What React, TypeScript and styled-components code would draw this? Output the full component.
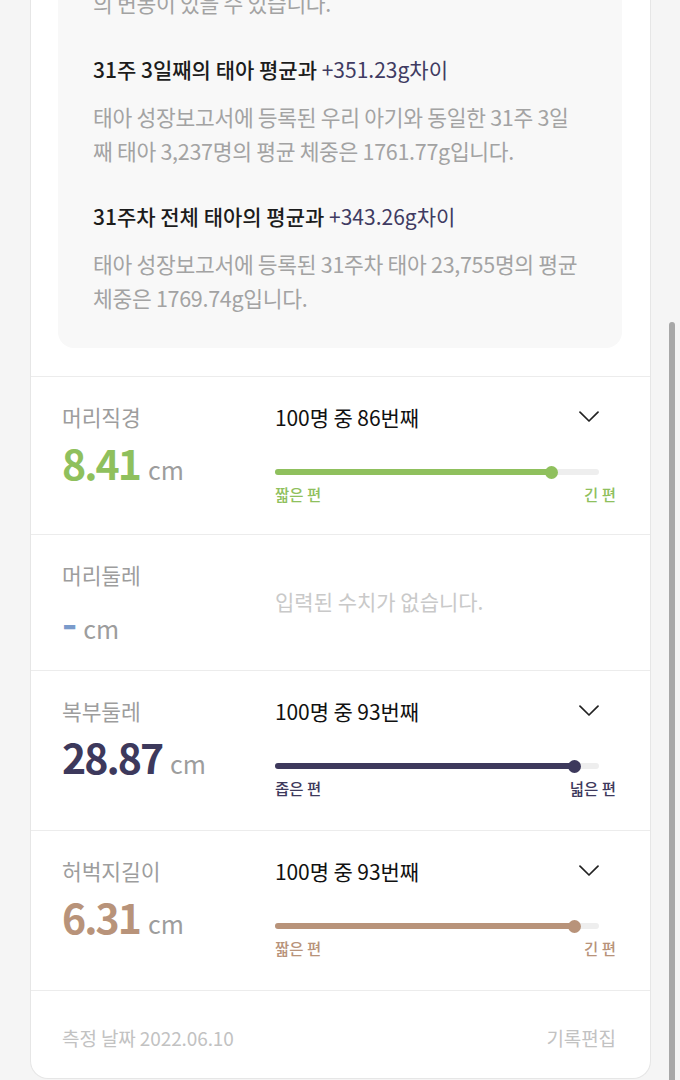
import styled, { createGlobalStyle } from "styled-components";

const GlobalStyle = createGlobalStyle`
  html, body {
    margin: 0;
    padding: 0;
    background: #f5f5f5;
    overflow: hidden;
  }
  body {
    font-family: "Noto Sans CJK KR", "Noto Sans", sans-serif;
    -webkit-font-smoothing: antialiased;
  }
`;

const Card = styled.div`
  margin: -96px 0 0 30px;
  width: 621px;
  box-sizing: border-box;
  background: #fff;
  border: 1px solid #e6e6e6;
  border-top: none;
  border-radius: 0 0 18px 18px;
  padding-top: 28px;
`;

const InfoBox = styled.div`
  margin: 0 28px 28px 27px;
  padding: 20px 35px 33px;
  background: #f8f8f8;
  border-radius: 16px;
`;

const Desc = styled.p`
  margin: 0;
  font-size: 21.5px;
  line-height: 34px;
  color: #a3a3a3;
  letter-spacing: -0.3px;
  white-space: nowrap;
`;

const Heading = styled.h3<{ $first?: boolean }>`
  margin: ${(p) => (p.$first ? "32px" : "31px")} 0 14px;
  font-size: 21px;
  line-height: 34px;
  font-weight: 500;
  color: #1c1c1c;
  span {
    color: #3f3b62;
    font-weight: 400;
  }
`;

const Row = styled.div<{ $pad: number }>`
  display: grid;
  grid-template-columns: 213px 1fr;
  border-top: 1px solid #ececec;
  padding: 26px 34px ${(p) => p.$pad}px 31px;
`;

const Left = styled.div`
  display: flex;
  flex-direction: column;
`;

const Label = styled.div`
  font-size: 21.5px;
  line-height: 28px;
  color: #9d9d9d;
  letter-spacing: -0.1px;
`;

const Value = styled.div<{ $color: string; $gap: number }>`
  margin-top: ${(p) => p.$gap}px;
  display: flex;
  align-items: baseline;
  gap: 8px;
  height: 48px;
  line-height: 48px;
  b {
    font-size: 41px;
    font-weight: 700;
    color: ${(p) => p.$color};
    letter-spacing: -2px;
  }
  small {
    font-size: 25px;
    color: #9d9d9d;
    font-weight: 400;
  }
`;

const Right = styled.div`
  display: flex;
  flex-direction: column;
`;

const RankHead = styled.div`
  display: flex;
  justify-content: space-between;
  align-items: center;
  padding-right: 17px;
  font-size: 21px;
  line-height: 28px;
  color: #111;
  letter-spacing: -0.1px;
`;

const Track = styled.div`
  position: relative;
  margin: 38px 17px 0 0;
  height: 6px;
  border-radius: 3px;
  background: #eeeeee;
`;

const Fill = styled.div<{ $color: string }>`
  height: 100%;
  border-radius: 3px;
  background: ${(p) => p.$color};
  position: relative;
  &::after {
    content: "";
    position: absolute;
    right: -6px;
    top: -3.5px;
    width: 13px;
    height: 13px;
    border-radius: 50%;
    background: ${(p) => p.$color};
  }
`;

const Ends = styled.div<{ $color: string }>`
  margin-top: 8px;
  display: flex;
  justify-content: space-between;
  font-size: 15.5px;
  line-height: 22px;
  font-weight: 500;
  color: ${(p) => p.$color};
`;

const Empty = styled.div`
  align-self: center;
  font-size: 21px;
  color: #c9c9c9;
  margin-top: -4px;
`;

const Footer = styled.div`
  display: flex;
  justify-content: space-between;
  border-top: 1px solid #ececec;
  padding: 33px 34px 26px 31px;
  font-size: 19px;
  line-height: 28px;
  color: #c2c2c2;
  letter-spacing: -0.1px;
`;

const ScrollThumb = styled.div`
  position: fixed;
  right: 5px;
  top: 322px;
  width: 6px;
  height: 780px;
  border-radius: 3px;
  background: #a8a8a8;
`;

const Chevron = () => (
  <svg width="20" height="12" viewBox="0 0 20 12" fill="none">
    <path d="M1 1.2 L10 10 L19 1.2" stroke="#222" strokeWidth="1.7" strokeLinecap="round" strokeLinejoin="round" />
  </svg>
);

type Measure = {
  name: string;
  value: string;
  color: string;
  rank: number;
  low: string;
  high: string;
  pad: number;
};

const measures: Measure[] = [
  { name: "머리직경", value: "8.41", color: "#8fc05d", rank: 86, low: "짧은 편", high: "긴 편", pad: 29 },
  { name: "복부둘레", value: "28.87", color: "#3d395c", rank: 93, low: "좁은 편", high: "넓은 편", pad: 31 },
  { name: "허벅지길이", value: "6.31", color: "#b8937a", rank: 93, low: "짧은 편", high: "긴 편", pad: 31 },
];

const SliderRow = ({ m }: { m: Measure }) => (
  <Row $pad={m.pad}>
    <Left>
      <Label>{m.name}</Label>
      <Value $color={m.color} $gap={7}>
        <b>{m.value}</b>
        <small>cm</small>
      </Value>
    </Left>
    <Right>
      <RankHead>
        <span>100명 중 {m.rank}번째</span>
        <Chevron />
      </RankHead>
      <Track>
        <Fill $color={m.color} style={{ width: `${m.rank - 0.5}%` }} />
      </Track>
      <Ends $color={m.color}>
        <span>{m.low}</span>
        <span>{m.high}</span>
      </Ends>
    </Right>
  </Row>
);

export default function App() {
  return (
    <>
      <GlobalStyle />
      <Card>
        <InfoBox>
          <Desc>
            측정 시기와 방법에 따라 평균 체중과 약간
            <br />의 변동이 있을 수 있습니다.
          </Desc>
          <Heading $first>
            31주 3일째의 태아 평균과 <span>+351.23g차이</span>
          </Heading>
          <Desc>
            태아 성장보고서에 등록된 우리 아기와 동일한 31주 3일
            <br />째 태아 3,237명의 평균 체중은 1761.77g입니다.
          </Desc>
          <Heading>
            31주차 전체 태아의 평균과 <span>+343.26g차이</span>
          </Heading>
          <Desc>
            태아 성장보고서에 등록된 31주차 태아 23,755명의 평균
            <br />체중은 1769.74g입니다.
          </Desc>
        </InfoBox>

        <SliderRow m={measures[0]} />

        <Row $pad={25}>
          <Left>
            <Label>머리둘레</Label>
            <Value $color="#7a9bcb" $gap={8}>
              <b>-</b>
              <small>cm</small>
            </Value>
          </Left>
          <Empty>입력된 수치가 없습니다.</Empty>
        </Row>

        <SliderRow m={measures[1]} />
        <SliderRow m={measures[2]} />

        <Footer>
          <span>측정 날짜 2022.06.10</span>
          <span>기록편집</span>
        </Footer>
      </Card>
      <ScrollThumb />
    </>
  );
}
